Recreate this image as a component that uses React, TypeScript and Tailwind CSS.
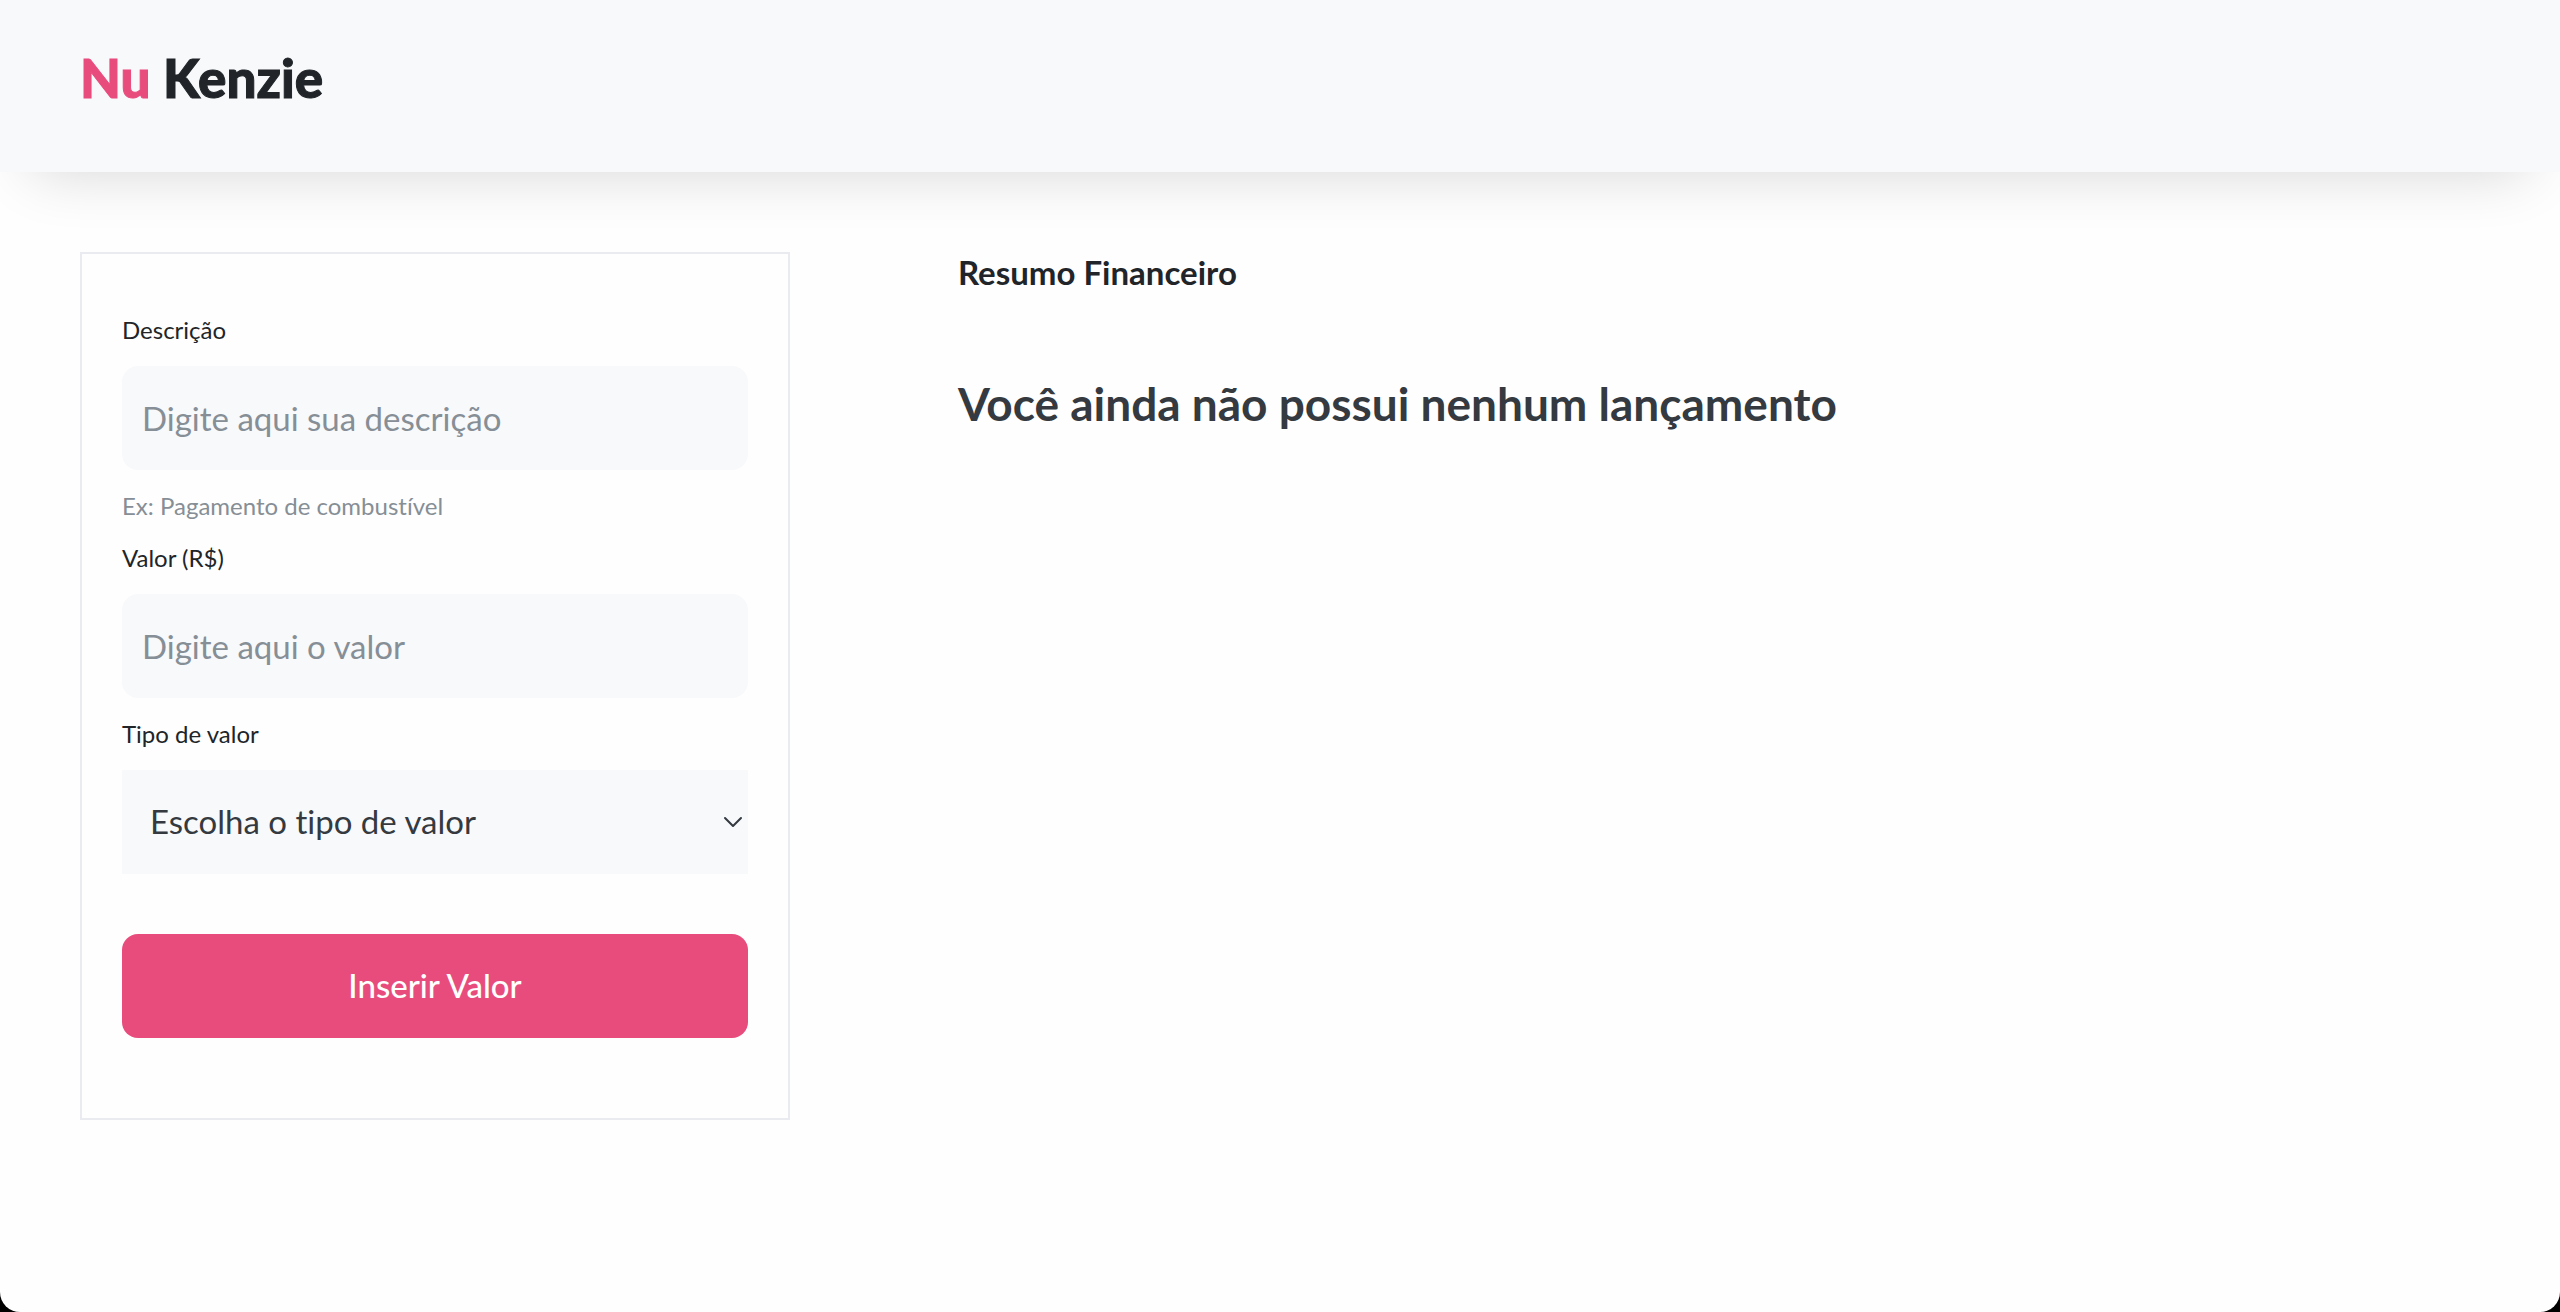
const fieldClass =
  "block h-26 w-full rounded-2xl bg-[#f8f9fb] px-5 text-[33px] text-[#343a40] placeholder:text-[#868e96] placeholder:opacity-100 outline-none focus:ring-2 focus:ring-[#e84c7d]";
const labelClass = "block text-2xl leading-9 text-[#212529]";

function Header() {
  return (
    <header className="relative flex h-43 items-start bg-[#f8f9fb] px-20 pt-11 shadow-[0_32px_60px_-32px_rgba(0,0,0,0.16)]">
      <h1 className="text-[53px] leading-17 font-black text-[#212529] [-webkit-text-stroke:1px_currentColor]">
        <span className="text-[#e84c7d]">Nu</span> Kenzie
      </h1>
    </header>
  );
}

function EntryForm() {
  return (
    <form
      className="w-[710px] max-w-full border-2 border-[#e9ebf0] px-10 pt-[58px] pb-20"
      onSubmit={(event) => event.preventDefault()}
    >
      <label htmlFor="description" className={labelClass}>
        Descrição
      </label>
      <input
        id="description"
        type="text"
        placeholder="Digite aqui sua descrição"
        aria-describedby="description-hint"
        className={`${fieldClass} my-[18px]`}
      />
      <p id="description-hint" className="mb-4 text-2xl leading-9 text-[#868e96]">
        Ex: Pagamento de combustível
      </p>

      <label htmlFor="amount" className={labelClass}>
        Valor (R$)
      </label>
      <input
        id="amount"
        type="text"
        inputMode="decimal"
        placeholder="Digite aqui o valor"
        className={`${fieldClass} my-[18px]`}
      />

      <label htmlFor="kind" className={labelClass}>
        Tipo de valor
      </label>
      <div className="relative mt-[18px]">
        <select
          id="kind"
          defaultValue=""
          className="block h-26 w-full appearance-none bg-[#f8f9fb] px-7 text-[33px] text-[#343a40] outline-none focus:ring-2 focus:ring-[#e84c7d]"
        >
          <option value="">Escolha o tipo de valor</option>
          <option value="entrada">Entrada</option>
          <option value="despesa">Despesa</option>
        </select>
        <svg
          aria-hidden="true"
          viewBox="0 0 20 12"
          className="pointer-events-none absolute top-1/2 right-[5px] h-3 w-5 -translate-y-1/2"
          fill="none"
          stroke="#343a40"
          strokeWidth="2"
          strokeLinecap="round"
          strokeLinejoin="round"
        >
          <path d="M2 2l8 8 8-8" />
        </svg>
      </div>

      <button
        type="submit"
        className="mt-15 block h-26 w-full rounded-2xl bg-[#e84c7d] text-[33px] font-medium text-white"
      >
        Inserir Valor
      </button>
    </form>
  );
}

function Summary() {
  return (
    <section className="flex-1">
      <h2 className="text-[33px] leading-10 font-bold text-[#212529]">Resumo Financeiro</h2>
      <p className="mt-20 text-[46px] leading-16 font-bold text-[#343a40]">
        Você ainda não possui nenhum lançamento
      </p>
    </section>
  );
}

export default function App() {
  return (
    <div className="min-h-screen bg-black">
      <div className="min-h-screen overflow-hidden rounded-b-[20px] bg-[#fefefe] font-['Lato',sans-serif] [font-variant-ligatures:none]">
        <Header />
        <main className="flex flex-col gap-12 px-20 pt-20 pb-20 lg:flex-row lg:items-start lg:gap-[168px]">
          <EntryForm />
          <Summary />
        </main>
      </div>
    </div>
  );
}
